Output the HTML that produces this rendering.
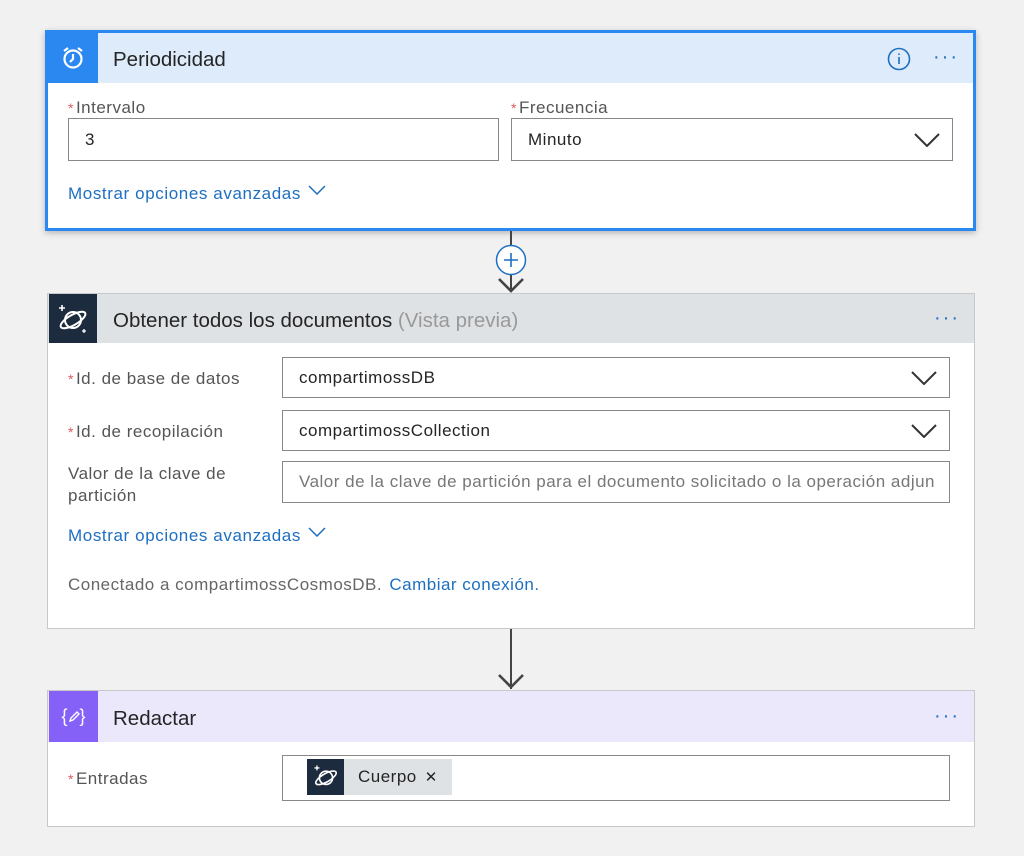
<!DOCTYPE html>
<html><head><meta charset="utf-8"><style>
*{box-sizing:border-box;margin:0;padding:0}
body{width:1024px;height:856px;background:#f1f1f1;font-family:"Liberation Sans",sans-serif;color:#333;position:relative;overflow:hidden}
.abs{position:absolute}
.card{position:absolute;background:#fff}
.hdr{position:absolute;left:0;right:0;top:0}
.ico{position:absolute;left:0;top:0;width:50px;display:flex;align-items:center;justify-content:center}
.title{position:absolute;left:65px;font-size:20.5px;color:#252525}
.dots{position:absolute;right:14px;color:#1e6fc1;font-size:20px;letter-spacing:2px}
.lbl{position:absolute;font-size:17px;letter-spacing:.5px;color:#555}
.star{color:#e15a5a;font-size:14px;margin-right:2px}
.inp{position:absolute;border:1px solid #888;background:#fff;font-size:17px;letter-spacing:.5px;color:#252525;padding-left:16px;display:flex;align-items:center;white-space:nowrap;overflow:hidden}
.link{position:absolute;font-size:17px;letter-spacing:.6px;color:#1e6fc1}
.chev{position:absolute;right:12px;top:50%;margin-top:-7px}
</style></head><body>

<div class="card" style="left:45px;top:30px;width:931px;height:201px;border:3px solid #2b88f0;box-shadow:0 2px 6px rgba(0,0,0,.25)">
 <div class="hdr" style="height:50px;background:#deebfb">
  <div class="ico" style="background:#2b88f0;height:50px">
   <svg width="26" height="26" viewBox="0 0 26 26" fill="none" stroke="#fff" stroke-width="2.2"><circle cx="13" cy="14" r="8.5"/><path d="M13 9v5l-3 3"/><path d="M4 6l4-3M22 6l-4-3"/></svg>
  </div>
  <div class="title" style="top:15px">Periodicidad</div>
  <svg class="abs" style="left:839px;top:14px" width="24" height="24" viewBox="0 0 24 24" fill="none" stroke="#1e6fc1" stroke-width="1.6"><circle cx="12" cy="12" r="10.5"/><path d="M12 10v7M12 6.5v1.5"/></svg>
  <div class="dots" style="top:13px">···</div>
 </div>
 <div class="lbl" style="left:20px;top:65px"><span class="star">*</span>Intervalo</div>
 <div class="inp" style="left:20px;top:85px;width:431px;height:43px">3</div>
 <div class="lbl" style="left:463px;top:65px"><span class="star">*</span>Frecuencia</div>
 <div class="inp" style="left:463px;top:85px;width:442px;height:43px">Minuto
  <svg class="chev" width="26" height="14" viewBox="0 0 26 14" fill="none" stroke="#333" stroke-width="2"><path d="M1 1l12 12 12-12"/></svg></div>
 <div class="link" style="left:20px;top:151px">Mostrar opciones avanzadas <svg width="18" height="10" viewBox="0 0 18 10" fill="none" stroke="#1e6fc1" stroke-width="1.5" style="margin-left:2px;vertical-align:4px"><path d="M1 1l8 8 8-8"/></svg></div>
</div>

<div class="abs" style="left:510px;top:231px;width:2px;height:60px;background:#444"></div>
<svg class="abs" style="left:495px;top:244px" width="32" height="50" viewBox="0 0 32 50"><circle cx="16" cy="16" r="14.5" fill="#fff" stroke="#1e6fc1" stroke-width="1.5"/><path d="M16 9v14M9 16h14" stroke="#1e6fc1" stroke-width="1.6"/><path d="M4 35l12 12 12-12" fill="none" stroke="#444" stroke-width="2.6"/></svg>

<div class="card" style="left:47px;top:293px;width:928px;height:336px;border:1px solid #c8c8c8">
 <div class="hdr" style="height:49px;background:#dfe2e5">
  <div class="ico" style="background:#1d2b3e;height:49px;left:1px;width:48px">
   <svg width="34" height="34" viewBox="0 0 34 34" fill="none" stroke="#fff" stroke-width="2"><circle cx="17" cy="18" r="8"/><ellipse cx="17" cy="18" rx="14" ry="5" transform="rotate(-30 17 18)"/><path d="M6 3v6M3 6h6" stroke-width="1.6"/><path d="M28 27v4M26 29h4" stroke-width="1.3"/></svg>
  </div>
  <div class="title" style="top:15px">Obtener todos los documentos <span style="color:#999">(Vista previa)</span></div>
  <div class="dots" style="top:13px">···</div>
 </div>
 <div class="lbl" style="left:20px;top:75px"><span class="star">*</span>Id. de base de datos</div>
 <div class="inp" style="left:234px;top:63px;width:668px;height:41px">compartimossDB
  <svg class="chev" width="26" height="14" viewBox="0 0 26 14" fill="none" stroke="#333" stroke-width="2"><path d="M1 1l12 12 12-12"/></svg></div>
 <div class="lbl" style="left:20px;top:128px"><span class="star">*</span>Id. de recopilación</div>
 <div class="inp" style="left:234px;top:116px;width:668px;height:41px">compartimossCollection
  <svg class="chev" width="26" height="14" viewBox="0 0 26 14" fill="none" stroke="#333" stroke-width="2"><path d="M1 1l12 12 12-12"/></svg></div>
 <div class="lbl" style="left:20px;top:169px;line-height:22px">Valor de la clave de<br>partición</div>
 <div class="inp" style="left:234px;top:167px;width:668px;height:42px;color:#777;padding-right:14px"><span style="display:block;overflow:hidden;width:100%">Valor de la clave de partición para el documento solicitado o la operación adjunta</span></div>
 <div class="link" style="left:20px;top:232px">Mostrar opciones avanzadas <svg width="18" height="10" viewBox="0 0 18 10" fill="none" stroke="#1e6fc1" stroke-width="1.5" style="margin-left:2px;vertical-align:4px"><path d="M1 1l8 8 8-8"/></svg></div>
 <div class="lbl" style="left:20px;top:281px;color:#666">Conectado a compartimossCosmosDB. <span style="color:#1e6fc1;margin-left:2px">Cambiar conexión.</span></div>
</div>

<div class="abs" style="left:510px;top:629px;width:2px;height:60px;background:#444"></div>
<svg class="abs" style="left:495px;top:666px" width="32" height="26" viewBox="0 0 32 26"><path d="M4 9l12 12 12-12" fill="none" stroke="#444" stroke-width="2.6"/></svg>

<div class="card" style="left:47px;top:690px;width:928px;height:137px;border:1px solid #c8c8c8">
 <div class="hdr" style="height:51px;background:#ece8fc">
  <div class="ico" style="background:#8661f8;height:51px;left:1px;width:49px;color:#fff;font-size:18px">{<svg width="12" height="12" viewBox="0 0 12 12" fill="none" stroke="#fff" stroke-width="1.4"><path d="M2 10l1-3 6-6 2 2-6 6z"/></svg>}</div>
  <div class="title" style="top:16px">Redactar</div>
  <div class="dots" style="top:14px">···</div>
 </div>
 <div class="lbl" style="left:20px;top:78px"><span class="star">*</span>Entradas</div>
 <div class="inp" style="left:234px;top:64px;width:668px;height:46px;padding-left:0">
  <div class="abs" style="left:24px;top:3px;height:36px;width:145px;background:#dfe2e5;display:flex;align-items:center">
   <div style="width:37px;height:36px;background:#1d2b3e;display:flex;align-items:center;justify-content:center">
    <svg width="28" height="28" viewBox="0 0 34 34" fill="none" stroke="#fff" stroke-width="2"><circle cx="17" cy="18" r="8"/><ellipse cx="17" cy="18" rx="14" ry="5" transform="rotate(-30 17 18)"/><path d="M6 3v6M3 6h6" stroke-width="1.6"/></svg>
   </div>
   <span style="margin-left:14px">Cuerpo</span><span style="margin-left:8px;font-size:15px">✕</span>
  </div>
 </div>
</div>
</body></html>
